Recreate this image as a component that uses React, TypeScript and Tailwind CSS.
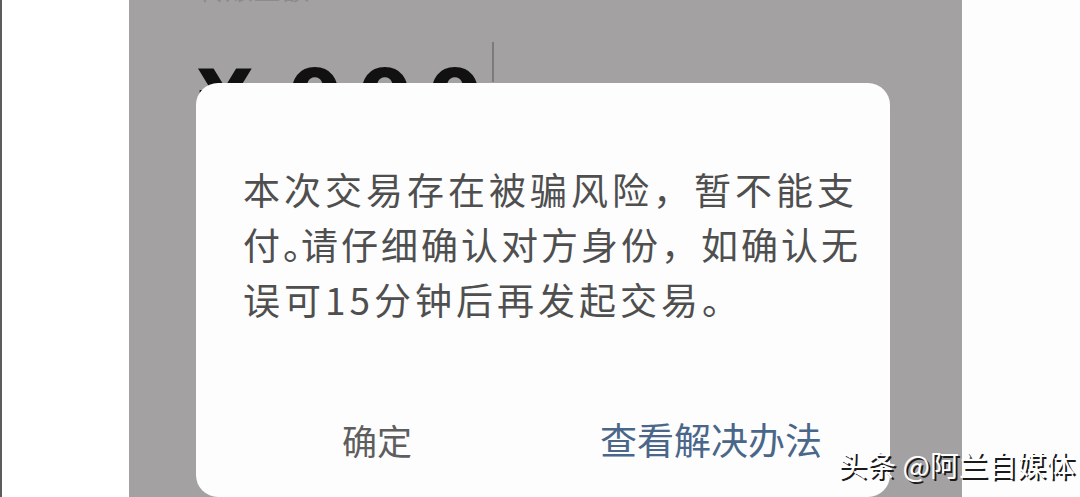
import React from "react";

const cjk = "font-['Noto_Sans_CJK_SC','Noto_Sans',sans-serif]";
const amountFont = "font-['DejaVu_Sans',sans-serif]";

function AmountField() {
  return (
    <div className="flex flex-col pl-[68px]">
      <div className={`-mt-[30px] h-[36px] text-[28px] leading-[36px] text-[#8e8b8c] ${cjk}`}>转账金额</div>
      <div className="mt-[12px] flex items-start">
        <span className={`mt-[42px] w-[90px] text-[80px] leading-none font-bold text-[#111] ${amountFont}`}>¥</span>
        {["0", "0", "0"].map((d, i) => (
          <span key={i} className={`mt-[42px] w-[70px] text-[80px] leading-none font-bold text-[#111] ${amountFont}`}>
            {d}
          </span>
        ))}
        <div className="-ml-[5px] mt-[24px] h-[40px] w-[2px] bg-[#7d7a7b]" />
      </div>
    </div>
  );
}

function RiskDialog() {
  const lines = [
    "本次交易存在被骗风险，暂不能支",
    "付。请仔细确认对方身份，如确认无",
    "误可15分钟后再发起交易。",
  ];
  return (
    <div className="absolute left-[67px] top-[83px] flex h-[414px] w-[694px] flex-col rounded-[22px] bg-[#fdfdfe]">
      <div className={`pl-[47px] pt-[79px] text-[37px] leading-[55px] tracking-[4px] text-[#4f4f4f] ${cjk}`}>
        {lines.map((l, i) => (
          <div key={i} className="whitespace-nowrap">
            {l.startsWith("付。") ? (
              <span className="tracking-[3px]">
                付<span className="tracking-[-19px]">。</span>
                {l.slice(2)}
              </span>
            ) : (
              l
            )}
          </div>
        ))}
      </div>
      <div className={`mt-[94px] flex items-center leading-none ${cjk}`}>
        <button className="w-[404px] pl-[146px] text-left text-[35px] text-[#5e5e5e]">确定</button>
        <button className="text-[37px] text-[#4a6689]">查看解决办法</button>
      </div>
    </div>
  );
}

export default function App() {
  return (
    <div className="relative flex h-[497px] w-[1080px] overflow-hidden bg-white">
      <div className="w-[2px] bg-[#5c5c5c]" />
      <div className="w-[127px]" />
      <div className="relative w-[833px] overflow-hidden bg-[#a4a1a2]">
        <AmountField />
        <RiskDialog />
      </div>
      <div className="flex-1 bg-[#fdfdfe]" />
      <div
        className={`absolute left-[838px] top-[450px] text-[29px] leading-none text-white [text-shadow:2px_2px_0_#1a1a1a] ${cjk}`}
      >
        头条 @阿兰自媒体
      </div>
    </div>
  );
}
